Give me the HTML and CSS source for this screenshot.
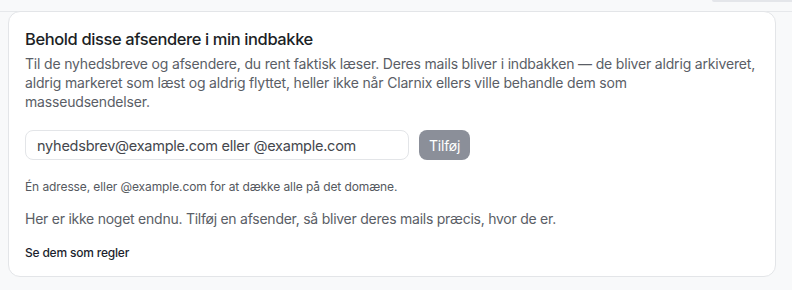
FILE: index.html
```html
<!DOCTYPE html>
<html lang="da">
<head>
<meta charset="utf-8">
<title>Behold afsendere</title>
<link rel="stylesheet" href="styles.css">
</head>
<body>
<div class="topbar"><div class="topbar-btn"></div></div>
<section class="card">
  <h2 class="title">Behold disse afsendere i min indbakke</h2>
  <p class="desc">Til de nyhedsbreve og afsendere, du rent faktisk læser. Deres mails bliver i indbakken — de bliver aldrig arkiveret, aldrig markeret som læst og aldrig flyttet, heller ikke når Clarnix ellers ville behandle dem som<br>masseudsendelser.</p>
  <form class="add-row">
    <input class="field" type="text" value="nyhedsbrev@example.com eller @example.com">
    <button class="add-btn" type="button">Tilføj</button>
  </form>
  <p class="hint">Én adresse, eller @example.com for at dække alle på det domæne.</p>
  <p class="empty">Her er ikke noget endnu. Tilføj en afsender, så bliver deres mails præcis, hvor de er.</p>
  <a class="rules-link" href="#">Se dem som regler</a>
</section>
</body>
</html>
```
FILE: styles.css
```css
* { box-sizing: border-box; }
html, body { margin: 0; padding: 0; }
body {
  background: #f8f9fa;
  font-family: Inter, "Noto Sans", sans-serif;
  color: #1c1f26;
  width: 792px;
  height: 290px;
  overflow: hidden;
}
.topbar {
  height: 12px;
  border-bottom: 1px solid #e6e8eb;
  display: flex;
  justify-content: flex-end;
}
.topbar-btn {
  width: 80px;
  height: 2px;
  background: #e4e6ea;
  border-radius: 0 0 0 4px;
}
.card {
  margin: -1px 16px 0 8px;
  background: #ffffff;
  border: 1px solid #e3e5e8;
  border-radius: 12px;
  padding: 16px;
  height: 266px;
}
.title {
  margin: 0;
  font-size: 16.5px;
  font-weight: 500;
  letter-spacing: -0.4px;
  line-height: 22px;
  color: #1c1f26;
}
.desc {
  margin: 4px 0 0;
  font-size: 14px;
  line-height: 19px;
  letter-spacing: -0.18px;
  color: #5a5e66;
}
.add-row {
  display: flex;
  gap: 10px;
  margin: 19px 0 0;
}
.field {
  width: 384px;
  height: 30px;
  border: 1px solid #e3e5e8;
  border-radius: 8px;
  padding: 0 11px;
  font-family: inherit;
  font-size: 14.5px;
  letter-spacing: -0.25px;
  color: #44474d;
  background: #fff;
}
.add-btn {
  height: 30px;
  padding: 0 10px;
  border: 0;
  border-radius: 8px;
  background: #8b8f99;
  color: #fff;
  font-family: inherit;
  font-size: 14px;
  letter-spacing: -0.2px;
}
.hint {
  margin: 19px 0 0;
  font-size: 12px;
  line-height: 16px;
  letter-spacing: -0.1px;
  color: #555960;
}
.empty {
  margin: 14px 0 0;
  font-size: 14px;
  line-height: 19px;
  letter-spacing: -0.25px;
  color: #5a5e66;
}
.rules-link {
  display: inline-block;
  margin-top: 17px;
  font-size: 12px;
  font-weight: 500;
  letter-spacing: -0.2px;
  color: #1c1f2e;
  text-decoration: none;
}
```
